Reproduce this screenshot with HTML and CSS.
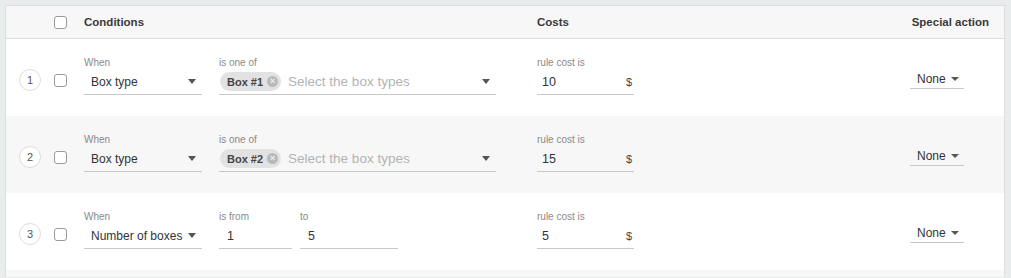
FILE: index.html
```html
<!DOCTYPE html>
<html lang="en">
<head>
  <meta charset="UTF-8" />
  <title>Shipping rules</title>
  <link rel="stylesheet" href="styles.css">
</head>
<body>
  <div class="rules-table">
    <div class="row head">
      <div class="cell-index"></div>
      <div class="cell-check"><span class="checkbox"></span></div>
      <div class="cell-conditions">Conditions</div>
      <div class="cell-costs">Costs</div>
      <div class="cell-action">Special action</div>
    </div>

    <div class="row rule">
      <div class="cell-index"><span class="num">1</span></div>
      <div class="cell-check"><span class="checkbox"></span></div>
      <div class="cell-conditions">
        <div class="field w-when">
          <label>When</label>
          <div class="control">Box type<span class="caret"></span></div>
        </div>
        <div class="field w-oneof">
          <label>is one of</label>
          <div class="control">
            <span class="chip">Box #1<span class="chip-x">×</span></span>
            <span class="placeholder">Select the box types</span>
            <span class="caret"></span>
          </div>
        </div>
      </div>
      <div class="cell-costs">
        <div class="field w-cost">
          <label>rule cost is</label>
          <div class="control"><span class="value">10</span><span class="unit">$</span></div>
        </div>
      </div>
      <div class="cell-action">
        <div class="action-select">None<span class="caret"></span></div>
      </div>
    </div>

    <div class="row rule">
      <div class="cell-index"><span class="num">2</span></div>
      <div class="cell-check"><span class="checkbox"></span></div>
      <div class="cell-conditions">
        <div class="field w-when">
          <label>When</label>
          <div class="control">Box type<span class="caret"></span></div>
        </div>
        <div class="field w-oneof">
          <label>is one of</label>
          <div class="control">
            <span class="chip">Box #2<span class="chip-x">×</span></span>
            <span class="placeholder">Select the box types</span>
            <span class="caret"></span>
          </div>
        </div>
      </div>
      <div class="cell-costs">
        <div class="field w-cost">
          <label>rule cost is</label>
          <div class="control"><span class="value">15</span><span class="unit">$</span></div>
        </div>
      </div>
      <div class="cell-action">
        <div class="action-select">None<span class="caret"></span></div>
      </div>
    </div>

    <div class="row rule">
      <div class="cell-index"><span class="num">3</span></div>
      <div class="cell-check"><span class="checkbox"></span></div>
      <div class="cell-conditions">
        <div class="field w-when">
          <label>When</label>
          <div class="control">Number of boxes<span class="caret"></span></div>
        </div>
        <div class="field w-from">
          <label>is from</label>
          <div class="control"><span class="value">1</span></div>
        </div>
        <div class="field w-to">
          <label>to</label>
          <div class="control"><span class="value">5</span></div>
        </div>
      </div>
      <div class="cell-costs">
        <div class="field w-cost">
          <label>rule cost is</label>
          <div class="control"><span class="value">5</span><span class="unit">$</span></div>
        </div>
      </div>
      <div class="cell-action">
        <div class="action-select">None<span class="caret"></span></div>
      </div>
    </div>

    <div class="row rule tail"></div>
  </div>
</body>
</html>
```

FILE: styles.css
```css
/* page */
html, body {
  margin: 0;
  padding: 0;
  background: #e9eced;
  font-family: "Liberation Sans", Arial, sans-serif;
  color: #333;
}
body {
  padding: 5px 0 0 5px;
  width: 1000px;
}

/* table card */
.rules-table {
  background: #fff;
  border: 1px solid #dcdedf;
  border-bottom: none;
}

.row {
  display: grid;
  grid-template-columns: 48px 30px 453px 363px 1fr;
}

/* header */
.row.head {
  height: 32px;
  align-items: center;
  background: #f7f7f7;
  border-bottom: 1px solid #dcdcdc;
  font-size: 11.5px;
  font-weight: bold;
  color: #3a3a3a;
  white-space: nowrap;
}
.row.head .cell-action {
  text-align: right;
  padding-right: 15px;
}
.row.head .cell-check {
  display: flex;
}

/* rule rows */
.row.rule {
  height: 77px;
  box-sizing: border-box;
  padding-top: 18px;
}
.row.rule:nth-child(odd) {
  background: #f7f7f7;
}
.row.tail {
  height: 7px;
  padding: 0;
}

.cell-index,
.cell-check {
  display: flex;
  align-items: flex-start;
}
.num {
  width: 22px;
  height: 22px;
  box-sizing: border-box;
  border: 1px solid #dddddd;
  border-radius: 50%;
  background: #fff;
  font-size: 11px;
  color: #555;
  display: flex;
  align-items: center;
  justify-content: center;
  margin: 12px 0 0 13px;
}
.checkbox {
  width: 13px;
  height: 13px;
  box-sizing: border-box;
  border: 1px solid #9a9a9a;
  border-radius: 3px;
  background: #fff;
}
.rule .checkbox {
  margin-top: 17px;
}

.cell-conditions {
  display: flex;
  gap: 17px;
}
.cell-conditions .w-to {
  margin-left: -9px;
}

/* field: small label + underlined control */
.field label {
  display: block;
  font-size: 10px;
  line-height: 12px;
  color: #8a8a8a;
}
.field .control {
  height: 26px;
  box-sizing: border-box;
  border-bottom: 1px solid #c8c8c8;
  display: flex;
  align-items: center;
  font-size: 12.5px;
  color: #333;
  padding-left: 7px;
  white-space: nowrap;
}
.w-when { width: 118px; }
.w-oneof { width: 277px; }
.w-from { width: 73px; }
.w-to { width: 98px; }
.w-cost { width: 97px; }

.w-when .control {
  font-size: 12px;
}
.w-from .control,
.w-to .control {
  padding-left: 8px;
}
.w-when .control .caret {
  margin-left: auto;
  margin-right: 6px;
}
.w-oneof .control {
  padding-left: 1px;
}
.w-oneof .caret {
  margin-left: auto;
  margin-right: 6px;
}
.w-cost .control {
  justify-content: space-between;
  padding-left: 5px;
  padding-right: 2px;
}
.unit {
  font-size: 11px;
  color: #444;
}

.caret {
  width: 0;
  height: 0;
  border-left: 4.5px solid transparent;
  border-right: 4.5px solid transparent;
  border-top: 5px solid #555;
  margin-left: 6px;
}

/* chip in multi-select */
.chip {
  display: inline-flex;
  align-items: center;
  height: 19px;
  padding: 0 3px 0 7px;
  border-radius: 10px;
  background: #e2e2e2;
  font-size: 11px;
  font-weight: bold;
  color: #444;
}
.chip-x {
  width: 11px;
  height: 11px;
  margin-left: 4px;
  border-radius: 50%;
  background: #b9b9b9;
  color: #eee;
  font-size: 9px;
  line-height: 11px;
  text-align: center;
}
.placeholder {
  margin-left: 7px;
  font-size: 13.5px;
  color: #b3b3b3;
}

/* special action */
.cell-action {
  padding-left: 10px;
}
.action-select {
  display: inline-flex;
  align-items: center;
  width: 54px;
  height: 20px;
  box-sizing: border-box;
  padding-left: 7px;
  margin-top: 12px;
  border-bottom: 1px solid #c8c8c8;
  font-size: 12px;
  color: #333;
}
.action-select .caret {
  margin-left: 5px;
  border-left-width: 4px;
  border-right-width: 4px;
  border-top-width: 4px;
}
```
